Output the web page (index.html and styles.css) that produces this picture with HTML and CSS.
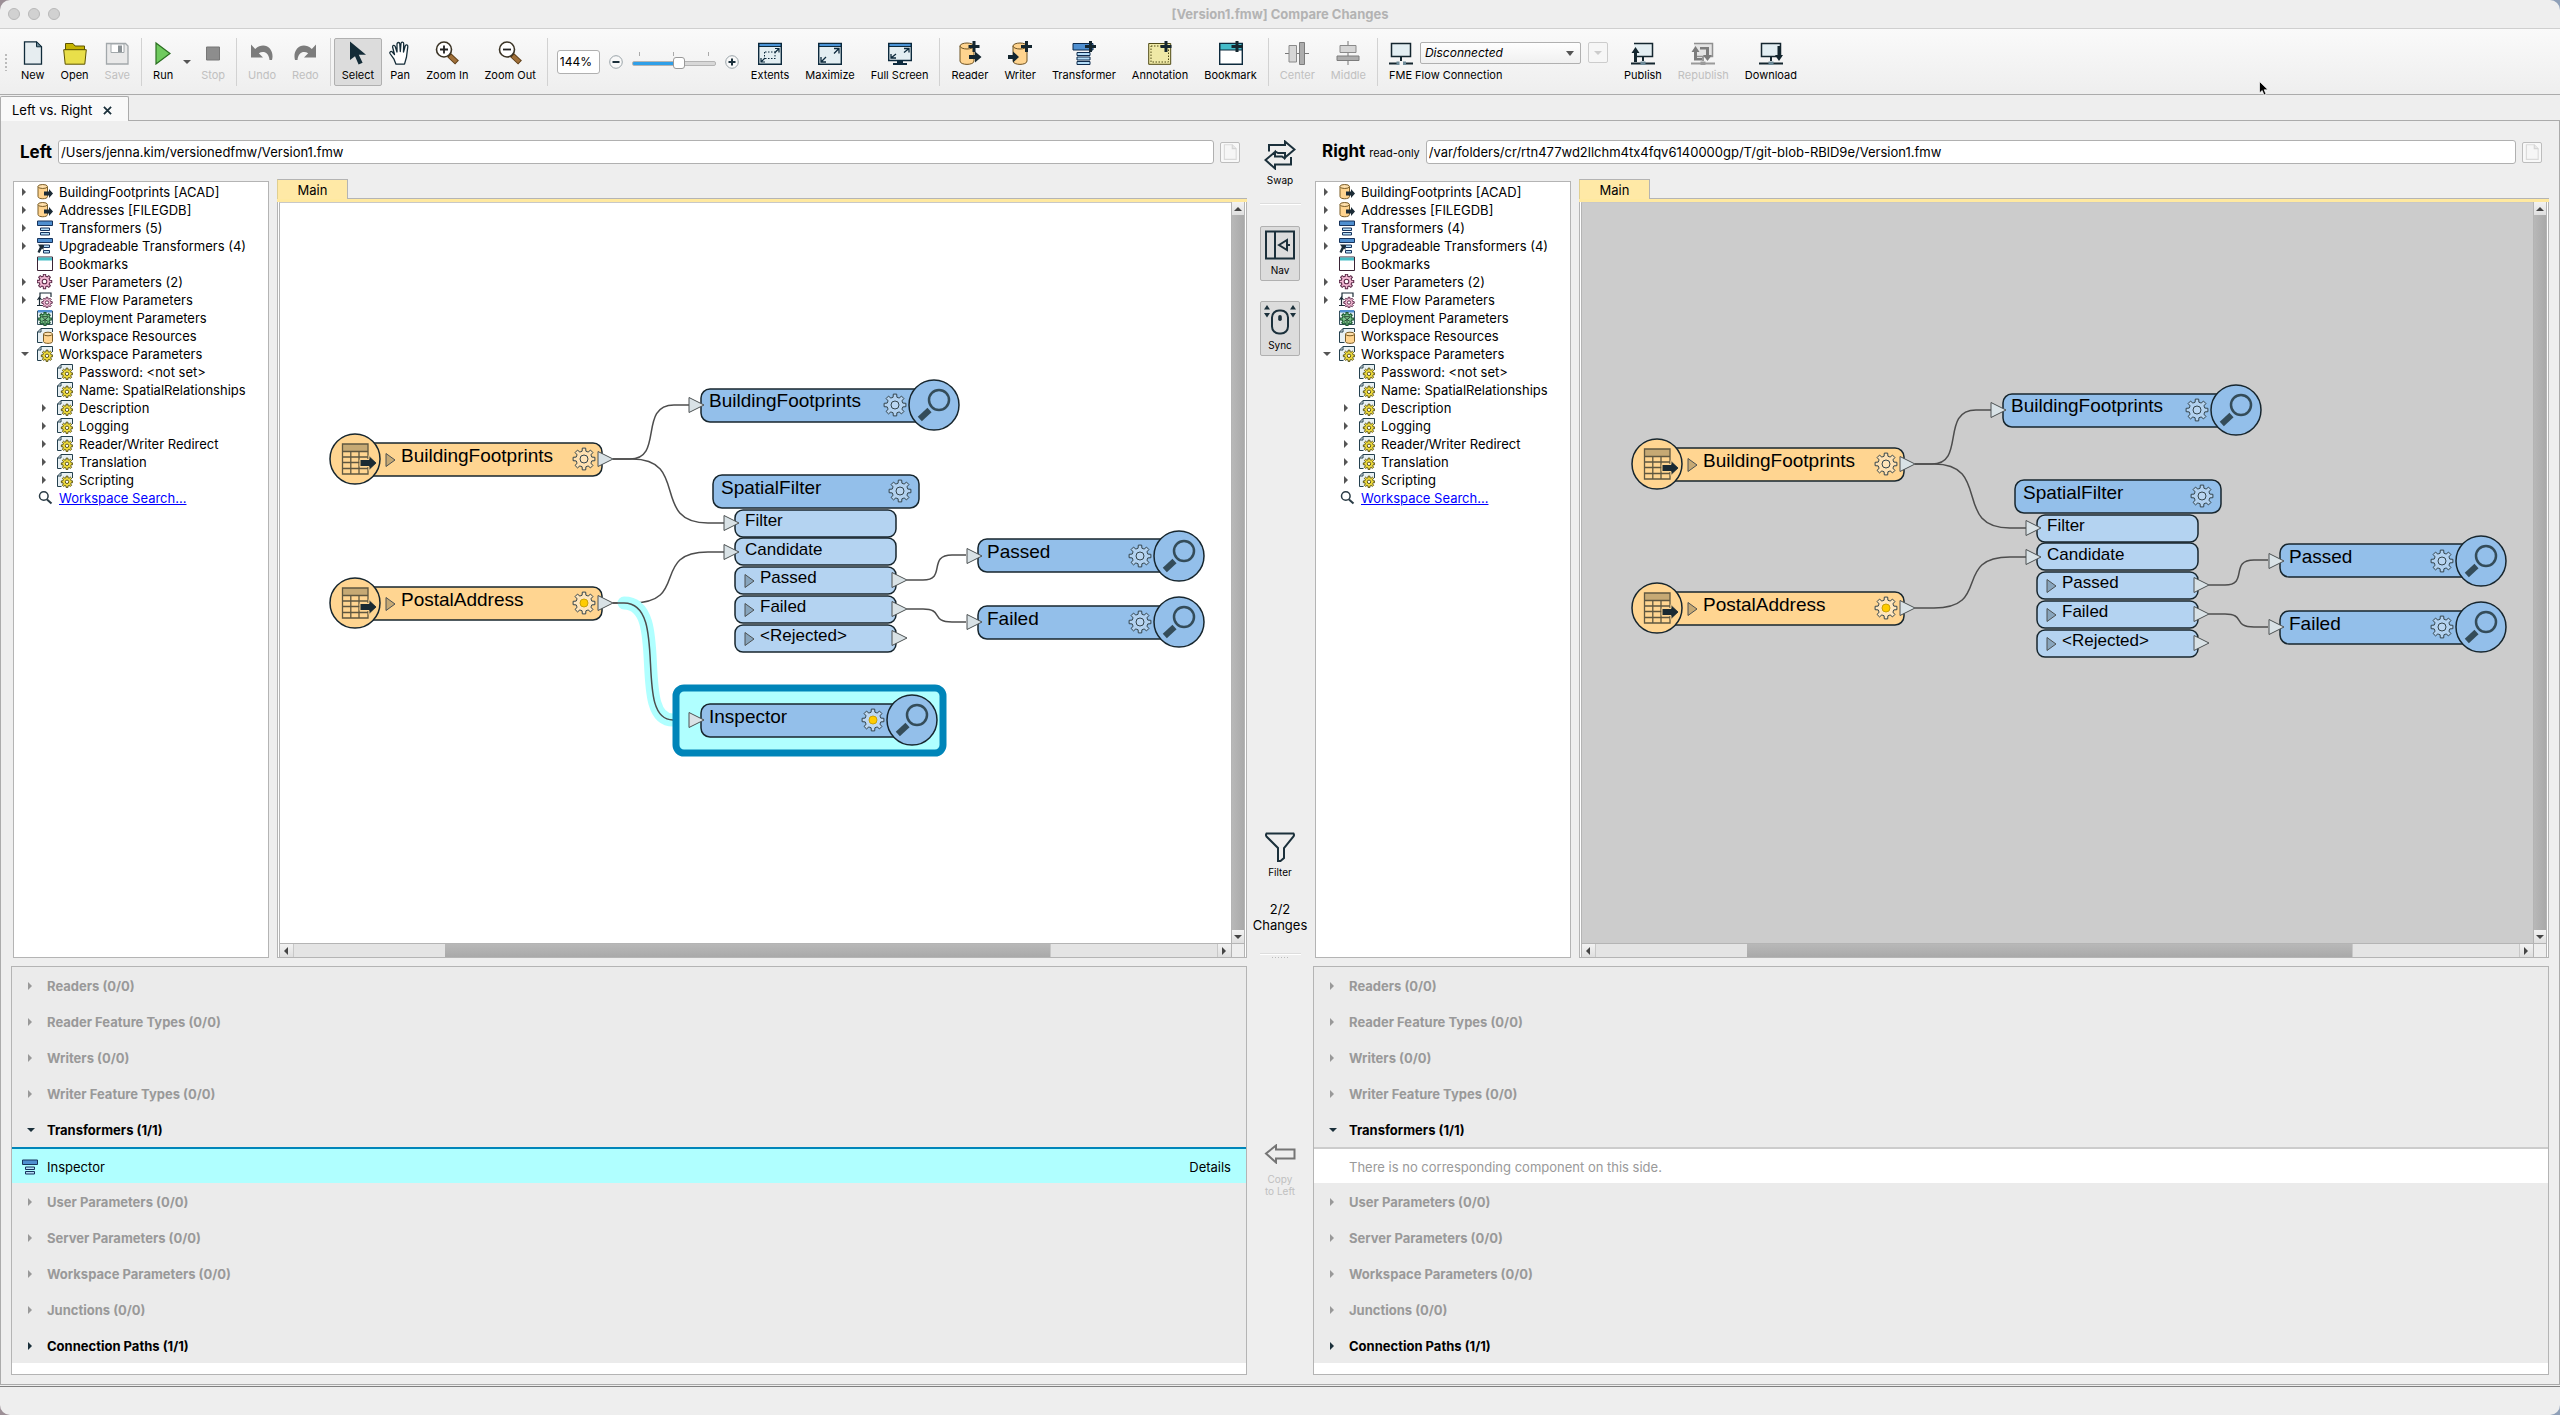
FILE: index.html
```html
<!DOCTYPE html>
<html lang="en">
<head>
<meta charset="utf-8">
<title>[Version1.fmw] Compare Changes</title>
<link rel="stylesheet" href="styles.css">
</head>
<body>
<svg class="sprite" aria-hidden="true">
  <defs>
    <path id="gear-shape" d="M7.8-1.9 10.9-1.7V1.7L7.8 1.9Q7.4 3.2 6.9 4.1L8.9 6.5 6.5 8.9 4.1 6.9Q3.2 7.4 1.9 7.8L1.7 10.9H-1.7L-1.9 7.8Q-3.2 7.4-4.1 6.9L-6.5 8.9-8.9 6.5-6.9 4.1Q-7.4 3.2-7.8 1.9L-10.9 1.7V-1.7L-7.8-1.9Q-7.4-3.2-6.9-4.1L-8.9-6.5-6.5-8.9-4.1-6.9Q-3.2-7.4-1.9-7.8L-1.7-10.9H1.7L1.9-7.8Q3.2-7.4 4.1-6.9L6.5-8.9 8.9-6.5 6.9-4.1Q7.4-3.2 7.8-1.9Z"/>
    <g id="node-gear"><use href="#gear-shape" fill="#fff" fill-opacity=".3" stroke="#33444c" stroke-width="1"/><circle r="4" fill="#fff" fill-opacity=".1" stroke="#33444c" stroke-width="1"/></g>
    <g id="node-gear-set"><use href="#gear-shape" fill="#fff" fill-opacity=".4" stroke="#33444c" stroke-width="1"/><circle r="4" fill="#fc0" stroke="#c9a208" stroke-width="1"/></g>
    <g id="node-lens"><circle r="25" fill="#93bfea" stroke="#17262e" stroke-width="1.5"/><path d="M-14.2 14-4.5 5" stroke="#344c59" stroke-width="6"/><circle cx="5" cy="-5" r="10" fill="none" stroke="#344c59" stroke-width="2.5"/></g>
    <g id="node-table"><circle r="25" fill="#ffd591" stroke="#17262e" stroke-width="1.5"/><path d="M-12.5-15h25.5v7.5h-25.5z" fill="#c6a974"/><path d="M-12.5-15h25.5V15h-25.5zM-12.5-7.5H13M-12.5-2H13M-12.5 3.5H13M-12.5 9.5H13M-4.2-7.5V15M4-7.5V15" fill="none" stroke="#5f5740" stroke-width="1.3"/><path d="M5 .5h9v-4L22 4l-8 7.500V7.500H5z" fill="#1a2a33" stroke="#ffd591" stroke-width="1"/></g>
    <path id="port" d="M0-7.500 15 0 0 7.500z" fill="#d9e2e6" stroke="#4c5152" stroke-width="1"/>
    <path id="chev" d="M0-6.500 9 0 0 6.500z"/>
  </defs>

  <symbol id="i-new" viewBox="0 0 24 24"><path d="M3.500.8h12l5 5v17.400h-17z" fill="#e6edf0" stroke="#102b3a" stroke-width="1.300"/><path d="M15.500.8v5h5z" fill="#6e8b99" stroke="#102b3a"/></symbol>
  <symbol id="i-open" viewBox="0 0 24 24"><path d="M2.500 9V2.500h7.500l2 2.500h9.500v4z" fill="#c6b400" stroke="#5c5300"/><path d="M.7 8.700h22.600l-1.500 14.500H2.200z" fill="#e9df4a" stroke="#5c5300"/></symbol>
  <symbol id="i-save" viewBox="0 0 24 24"><path d="M1.500 2.500h19l2.500 2.500v18h-21.500z" fill="#e9e9e9" stroke="#a2a8ab" stroke-width="1.300"/><path d="M6 3h13v8.500H6z" fill="#fff" stroke="#a2a8ab"/><path d="M13 4.500h4V11h-4z" fill="#8b9296"/></symbol>
  <symbol id="i-run" viewBox="0 0 24 24"><path d="M5 2l14 10.500L5 23z" fill="#6fca5e" stroke="#2a6e20" stroke-width="1.200"/></symbol>
  <symbol id="i-stop" viewBox="0 0 24 24"><path d="M5.500 6h13v13h-13z" fill="#8d8d8d" stroke="#777"/></symbol>
  <symbol id="i-undo" viewBox="0 0 24 24"><path d="M1 3.500v13h12l-4.200-4.200c4.500-2.800 10-1 10.700 6.700h2.500C25 8.500 15-.5 5.200 8z" fill="#7c7c7c"/></symbol>
  <symbol id="i-redo" viewBox="0 0 24 24"><path d="M23 3.500v13H11l4.200-4.200C10.700 9.500 5.200 11.300 4.500 19H2C-1 8.500 9-.5 18.800 8z" fill="#7c7c7c"/></symbol>
  <symbol id="i-select" viewBox="0 0 24 24"><path d="M4 .5v18.500l5-3.800 3.600 8.300 4-1.800-3.800-8h7.200z" fill="#142c38"/></symbol>
  <symbol id="i-pan" viewBox="0 0 24 24"><path d="M8 23.200l-2-5-4-5.700c-.8-1.500 1-2.800 2.300-1.500l2.200 2.500L4.600 6c-.2-1.800 2-2.200 2.600-.5L9 11V3c0-2 2.700-2 2.800 0l.5 7.500.7-8c.2-2 2.800-1.800 2.700.2L15.500 11l1.700-6c.5-1.700 2.800-1.200 2.600.6L18.500 16l-2 7.200z" fill="#fff" stroke="#142c38" stroke-width="1.300" stroke-linejoin="round"/></symbol>
  <symbol id="i-zin" viewBox="0 0 24 24"><path d="M14 14l8 7.500" stroke="#5a3a13" stroke-width="5.500"/><path d="M14.800 14.800l6.500 6" stroke="#a0703a" stroke-width="3.800"/><circle cx="9" cy="8.500" r="7.500" fill="#fff" stroke="#3b3426" stroke-width="1.600"/><path d="M5 8.500h8M9 4.500v8" stroke="#222" stroke-width="1.800"/></symbol>
  <symbol id="i-zout" viewBox="0 0 24 24"><path d="M14 14l8 7.500" stroke="#5a3a13" stroke-width="5.500"/><path d="M14.800 14.800l6.500 6" stroke="#a0703a" stroke-width="3.800"/><circle cx="9" cy="8.500" r="7.500" fill="#fff" stroke="#3b3426" stroke-width="1.600"/><path d="M5 8.500h8" stroke="#222" stroke-width="1.800"/></symbol>
  <symbol id="i-extents" viewBox="0 0 24 24"><path d="M.7 2.500h22.600v20.800H.7z" fill="#e3eef2" stroke="#0d2a3d" stroke-width="1.400"/><path d="M1 2.500h22v3H1z" fill="#4a93d6" stroke="#0d2a3d"/><path d="M7 11h10M7 17.500h10M6.500 11v7M17 11v7" stroke="#0d2a3d" stroke-dasharray="1.500 1.500"/><path d="M17 7.500h4v4M21 7.500l-4 4M3 17v4h4M3 21l4-4" fill="none" stroke="#0d2a3d" stroke-width="1.200"/></symbol>
  <symbol id="i-max" viewBox="0 0 24 24"><path d="M.7 2.500h22.600v20.800H.7z" fill="#e3eef2" stroke="#0d2a3d" stroke-width="1.400"/><path d="M1 2.500h22v3H1z" fill="#4a93d6" stroke="#0d2a3d"/><path d="M16 7.500h5v5M21 7.500l-5 5M3 16v5h5M3 21l5-5" fill="none" stroke="#0d2a3d" stroke-width="1.300"/></symbol>
  <symbol id="i-full" viewBox="0 0 24 24"><path d="M.7 2.500h22.600v17H.7z" fill="#e3eef2" stroke="#0d2a3d" stroke-width="1.400"/><path d="M1 2.500h22v3H1z" fill="#4a93d6" stroke="#0d2a3d"/><path d="M16 7.500h5v4M21 7.500l-5 4M3 13v4h5M3 17l5-4" fill="none" stroke="#0d2a3d" stroke-width="1.300"/><path d="M9 20h6v2h4v2H5v-2h4z" fill="#0d2a3d"/></symbol>
  <symbol id="i-reader" viewBox="0 0 24 24"><path d="M2 5v15c0 4.500 14 4.500 14 0V5" fill="#ffd48f" stroke="#6d5223"/><ellipse cx="9" cy="5" rx="7" ry="3" fill="#ffd48f" stroke="#6d5223"/><path d="M11 14h6v-3.500l6.500 5.500-6.500 5.500V18h-6z" fill="#14262f"/><path d="M16 0v11M10.500 5.500h11" stroke="#14262f" stroke-width="3"/></symbol>
  <symbol id="i-writer" viewBox="0 0 24 24"><path d="M5 5v15c0 4.500 14 4.500 14 0V5" fill="#ffd48f" stroke="#6d5223"/><ellipse cx="12" cy="5" rx="7" ry="3" fill="#ffd48f" stroke="#6d5223"/><path d="M0 14h5v-3.500l6 5.500-6 5.500V18H0z" fill="#14262f"/><path d="M18.500 0v11M13 5.500h11" stroke="#14262f" stroke-width="3"/></symbol>
  <symbol id="i-transformer" viewBox="0 0 24 24"><path d="M1 2.500h20v6.500H1z" fill="#4f8fd0" stroke="#0d2a4d"/><path d="M5 11.500h13v3H5zM5 16h13v3H5zM5 20.500h13v3H5z" fill="#b3dcf7" stroke="#0d2a4d"/><path d="M18.500 0v11M13 5.500h11" stroke="#14262f" stroke-width="3"/></symbol>
  <symbol id="i-annotation" viewBox="0 0 24 24"><path d="M.7 2.500h22v20.800h-22z" fill="#efe9a6" stroke="#4f4a16"/><path d="M3 5h17.500v16H3z" fill="none" stroke="#4f4a16" stroke-dasharray="1.500 1.500"/><path d="M18 0v11M12.500 5.500h11" stroke="#14262f" stroke-width="3"/></symbol>
  <symbol id="i-bookmark" viewBox="0 0 24 24"><path d="M.7 2.500h22.600v20.800H.7z" fill="#fff" stroke="#0d2a3d" stroke-width="1.400"/><path d="M1 2.500h22V9H1z" fill="#45bcc9" stroke="#0d2a3d"/><path d="M18 0v11M12.500 5.500H24" stroke="#14262f" stroke-width="3"/></symbol>
  <symbol id="i-center" viewBox="0 0 24 24"><path d="M0 12.500h24" stroke="#777"/><path d="M4 4.500h7.500v16.500H4z" fill="#d6d6d6" stroke="#8a8a8a"/><path d="M14.500 1.500h5v22h-5z" fill="#adadad" stroke="#7c7c7c"/></symbol>
  <symbol id="i-middle" viewBox="0 0 24 24"><path d="M12 0v24" stroke="#777"/><path d="M4 4.500h16v7H4z" fill="#d6d6d6" stroke="#8a8a8a"/><path d="M1 15h22v4.500H1z" fill="#adadad" stroke="#7c7c7c"/></symbol>
  <symbol id="i-flow" viewBox="0 0 24 24"><path d="M2.500 2.500h19v13h-19z" fill="#e3eef2" stroke="#14262f" stroke-width="1.500"/><path d="M12 16v4M0 22.500h8M16 22.500h8" stroke="#14262f" stroke-width="2"/><path d="M7.500 20.500h3v3.500h-3zM14 20.500h3v3.500h-3z" fill="#6e8b99"/></symbol>
  <symbol id="i-publish" viewBox="0 0 24 24"><path d="M3 2.500h18.500v13H5" fill="#e3eef2" stroke="#14262f" stroke-width="1.500"/><path d="M12 16v4M0 22.500h24" stroke="#14262f" stroke-width="2"/><path d="M9.500 20.500h5v3.500h-5z" fill="#6e8b99"/><path d="M4.500 6l4 6H6v9H3v-9H.5z" fill="#14262f"/></symbol>
  <symbol id="i-republish" viewBox="0 0 24 24"><path d="M3 2.500h18.500v13H5" fill="#e4e4e4" stroke="#909090" stroke-width="1.500"/><path d="M12 16v4M0 22.500h24" stroke="#9a9a9a" stroke-width="2"/><path d="M9.500 20.500h5v3.500h-5z" fill="#9a9a9a"/><path d="M4.500 5l4 6H6v6h5v2.500H3V11H.5zM9 6h9v8h3l-4.500 6L12 14h3V8.500H9z" fill="#7c7c7c"/></symbol>
  <symbol id="i-download" viewBox="0 0 24 24"><path d="M2.500 2.500h19v13h-19z" fill="#e3eef2" stroke="#14262f" stroke-width="1.500"/><path d="M12 16v4M0 22.500h24" stroke="#14262f" stroke-width="2"/><path d="M9.500 20.500h5v3.500h-5z" fill="#6e8b99"/><path d="M18.500 5h3v9h2.500l-4 6-4-6h2.500z" fill="#14262f"/></symbol>

  <symbol id="t-reader" viewBox="0 0 16 16"><path d="M1 2.500v10c0 3 9.500 3 9.500 0v-10" fill="#ffd48f" stroke="#7a5c27"/><ellipse cx="5.700" cy="2.500" rx="4.700" ry="2" fill="#ffe0ac" stroke="#7a5c27"/><path d="M7 7.500h5V5l4 4.500-4 4.500v-2.500H7z" fill="#1b2b36"/></symbol>
  <symbol id="t-transformer" viewBox="0 0 16 16"><path d="M.5 1h15v4.500H.5z" fill="#4f8fd0" stroke="#17335c"/><path d="M3.500 8h9v2.500h-9zM3.500 12.500h9V15h-9z" fill="#b3dcf7" stroke="#17335c"/></symbol>
  <symbol id="t-upgrade" viewBox="0 0 16 16"><path d="M.5.5h15v4H.5z" fill="#4f8fd0" stroke="#17335c"/><path d="M6.500 7h6v2.500h-6zM6.500 12.500h6V15h-6z" fill="#b3dcf7" stroke="#17335c"/><path d="M1 6.500h5.500V12L5 10.500 2.500 15 .5 14l2.300-5z" fill="#1b2b36"/></symbol>
  <symbol id="t-bookmarks" viewBox="0 0 16 16"><path d="M.5 1h15v13.500H.5z" fill="#fff" stroke="#3a2436"/><path d="M1 1.500h14v3H1z" fill="#45bcc4"/></symbol>
  <symbol id="t-user" viewBox="0 0 16 16"><g transform="translate(7.500 7.500) scale(.66)"><use href="#gear-shape" fill="#f3b9d4" stroke="#5c2a49" stroke-width="1.600"/><circle r="3.500" fill="#fff" stroke="#5c2a49" stroke-width="1.600"/></g></symbol>
  <symbol id="t-flow" viewBox="0 0 16 16"><path d="M3 5V1h11v4M2.500 13V6M.5 8l2-3 2 3M0 13.500h6" fill="none" stroke="#1b2b36" stroke-width="1.200"/><g transform="translate(10 10.500) scale(.48)"><use href="#gear-shape" fill="#f3b9d4" stroke="#5c2a49" stroke-width="2"/><circle r="3.500" fill="#fff" stroke="#5c2a49" stroke-width="2"/></g></symbol>
  <symbol id="t-deploy" viewBox="0 0 16 16"><path d="M.5 1h15v13.500H.5z" fill="#e6f0f4" stroke="#35505e"/><path d="M1 0h14v2.500H1z" fill="#4f8fd0"/><g transform="translate(8 9) scale(.58)"><use href="#gear-shape" fill="#7cc48c" stroke="#1d5a32" stroke-width="2"/><path d="M-5-4 0 1l5-4M0 1v6M-5-4H5M-5 4 0 1l5 3" fill="none" stroke="#1d3a2a" stroke-width="1.500"/></g></symbol>
  <symbol id="t-res" viewBox="0 0 16 16"><path d="M5.500 14.500H.5V4L4 .5h11.500V4M4 .5V4H.5" fill="#e8f0f3" stroke="#24404f"/><path d="M6.500 6v7.500c0 2.500 9 2.500 9 0V6" fill="#ffd48f" stroke="#7a5c27"/><ellipse cx="11" cy="6" rx="4.500" ry="1.800" fill="#ffe0ac" stroke="#7a5c27"/></symbol>
  <symbol id="t-param" viewBox="0 0 16 16"><path d="M4.500 14.500H.5V4L4 .5h11.500V6M4 .5V4H.5" fill="#e8f0f3" stroke="#24404f"/><g transform="translate(10 9.800) scale(.52)"><use href="#gear-shape" fill="#f0dc3c" stroke="#544c10" stroke-width="1.800"/><circle r="3.300" fill="#fff" stroke="#544c10" stroke-width="1.800"/></g></symbol>
  <symbol id="t-search" viewBox="0 0 16 16"><circle cx="6.800" cy="6" r="4.300" fill="none" stroke="#2a3b45" stroke-width="1.500"/><path d="M10 9.500l4.500 4" stroke="#2a3b45" stroke-width="2"/></symbol>
  <symbol id="a-right" viewBox="0 0 8 8"><path d="M1 0l4 4-4 4z" fill="currentColor"/></symbol>
  <symbol id="a-down" viewBox="0 0 8 8"><path d="M0 2h8L4 6z" fill="currentColor"/></symbol>
  <symbol id="a-left" viewBox="0 0 8 8"><path d="M5 0v8L1 4z" fill="currentColor"/></symbol>
  <symbol id="a-up" viewBox="0 0 8 8"><path d="M0 6h8L4 2z" fill="currentColor"/></symbol>
  <symbol id="i-page" viewBox="0 0 16 16"><path d="M3 1.500h7l3.500 3.500v9.500H3z" fill="#f6f6f6" stroke="#dadada"/><path d="M10 1.500V5h3.500" fill="#e6e6e6" stroke="#d4d4d4"/></symbol>
  <symbol id="m-swap" viewBox="0 0 32 30"><path d="M5 11.500V5h16V1.500l9.500 8-9.500 8v-4.500H14l-3.500-2M27 17v7.500H11V28.500L1.500 20l9.500-8v4.500h7l3.500 2.500" fill="none" stroke="#1b303b" stroke-width="2"/></symbol>
  <symbol id="m-nav" viewBox="0 0 32 30"><path d="M2 1.500h28v27H2zM11 1.500v27" fill="none" stroke="#1b303b" stroke-width="2"/><path d="M15 15l8-5v10zM22 15h4" fill="none" stroke="#1b303b" stroke-width="2"/></symbol>
  <symbol id="m-sync" viewBox="0 0 32 30"><rect x="8" y="5.500" width="16" height="23" rx="7" fill="none" stroke="#1b303b" stroke-width="2"/><rect x="14.200" y="10" width="3.600" height="6" rx="1.800" fill="#1b303b"/><path d="M0 4.500l3-4.500 3 4.500zM0 8h6l-3 4.500zM26 4.500L29 0l3 4.500zM26 8h6l-3 4.500z" fill="#1b303b"/></symbol>
  <symbol id="m-filter" viewBox="0 0 32 30"><path d="M2.500 1.500h27q1 1.500 0 3L20 16v10l-3.500 3h-2.500V16L2.500 4.500q-1-1.500 0-3z" fill="none" stroke="#1b303b" stroke-width="2"/></symbol>
  <symbol id="m-copy" viewBox="0 0 32 20"><path d="M2 9.500L12 1.500v4h18.500v9H12v4z" fill="none" stroke="#757575" stroke-width="2"/></symbol>
</svg>

<div class="window">
  <header class="titlebar">
    <div class="lights"><i></i><i></i><i></i></div>
    <h1>[Version1.fmw] Compare Changes</h1>
  </header>

  <nav class="toolbar" aria-label="Main toolbar">
    <span class="grip"></span>
    <button class="tool"><svg><use href="#i-new"/></svg>New</button>
    <button class="tool"><svg><use href="#i-open"/></svg>Open</button>
    <button class="tool" disabled><svg><use href="#i-save"/></svg>Save</button>
    <span class="sep"></span>
    <button class="tool"><svg><use href="#i-run"/></svg>Run</button>
    <button class="drop" aria-label="Run options"><svg><use href="#a-down"/></svg></button>
    <button class="tool" disabled><svg><use href="#i-stop"/></svg>Stop</button>
    <span class="sep"></span>
    <button class="tool" disabled><svg><use href="#i-undo"/></svg>Undo</button>
    <button class="tool" disabled><svg><use href="#i-redo"/></svg>Redo</button>
    <span class="sep"></span>
    <button class="tool pressed" aria-pressed="true"><svg><use href="#i-select"/></svg>Select</button>
    <button class="tool"><svg><use href="#i-pan"/></svg>Pan</button>
    <button class="tool"><svg><use href="#i-zin"/></svg>Zoom In</button>
    <button class="tool"><svg><use href="#i-zout"/></svg>Zoom Out</button>
    <span class="sep"></span>
    <div class="zoom">
      <input class="zoom-value" type="text" value="144%" aria-label="Zoom level">
      <button class="round" aria-label="Decrease zoom"><svg viewBox="0 0 14 14"><circle cx="7" cy="7" r="6.300" fill="#f8f8f8" stroke="#9aa4a9"/><path d="M3.500 7h7" stroke="#1b303b" stroke-width="2"/></svg></button>
      <div class="slider"><span class="ticks"><i></i><i></i><i></i></span><input type="range" min="0" max="100" value="57" aria-label="Zoom"></div>
      <button class="round" aria-label="Increase zoom"><svg viewBox="0 0 14 14"><circle cx="7" cy="7" r="6.300" fill="#f8f8f8" stroke="#9aa4a9"/><path d="M3.500 7h7M7 3.500v7" stroke="#1b303b" stroke-width="2"/></svg></button>
    </div>
    <button class="tool"><svg><use href="#i-extents"/></svg>Extents</button>
    <button class="tool"><svg><use href="#i-max"/></svg>Maximize</button>
    <button class="tool"><svg><use href="#i-full"/></svg>Full Screen</button>
    <span class="sep"></span>
    <button class="tool"><svg><use href="#i-reader"/></svg>Reader</button>
    <button class="tool"><svg><use href="#i-writer"/></svg>Writer</button>
    <button class="tool"><svg><use href="#i-transformer"/></svg>Transformer</button>
    <button class="tool"><svg><use href="#i-annotation"/></svg>Annotation</button>
    <button class="tool"><svg><use href="#i-bookmark"/></svg>Bookmark</button>
    <span class="sep"></span>
    <button class="tool" disabled><svg><use href="#i-center"/></svg>Center</button>
    <button class="tool" disabled><svg><use href="#i-middle"/></svg>Middle</button>
    <span class="sep"></span>
    <div class="flow">
      <div class="flow-row">
        <svg><use href="#i-flow"/></svg>
        <span class="combo"><select id="flow-conn"><option>Disconnected</option></select></span>
        <button class="mini" disabled aria-label="Connection options"><svg><use href="#a-down"/></svg></button>
      </div>
      <label for="flow-conn">FME Flow Connection</label>
    </div>
    <button class="tool"><svg><use href="#i-publish"/></svg>Publish</button>
    <button class="tool" disabled><svg><use href="#i-republish"/></svg>Republish</button>
    <button class="tool"><svg><use href="#i-download"/></svg>Download</button>
  </nav>

  <div class="tabs"><div class="tab">Left vs. Right <button aria-label="Close tab"><svg viewBox="0 0 8 8"><path d="M.8.8l6.400 6.400M7.200.8L.8 7.200" stroke="#1b303b" stroke-width="1.600"/></svg></button></div></div>

  <main class="compare">
    <section class="side">
      <div class="path"><label for="left-path">Left</label><input id="left-path" type="text" value="/Users/jenna.kim/versionedfmw/Version1.fmw"><button disabled aria-label="Browse"><svg><use href="#i-page"/></svg></button></div>
      <div class="panes">
        <ul class="tree">
          <li><svg class="arw"><use href="#a-right"/></svg><svg><use href="#t-reader"/></svg>BuildingFootprints [ACAD]</li>
          <li><svg class="arw"><use href="#a-right"/></svg><svg><use href="#t-reader"/></svg>Addresses [FILEGDB]</li>
          <li><svg class="arw"><use href="#a-right"/></svg><svg><use href="#t-transformer"/></svg>Transformers (5)</li>
          <li><svg class="arw"><use href="#a-right"/></svg><svg><use href="#t-upgrade"/></svg>Upgradeable Transformers (4)</li>
          <li><svg class="arw"></svg><svg><use href="#t-bookmarks"/></svg>Bookmarks</li>
          <li><svg class="arw"><use href="#a-right"/></svg><svg><use href="#t-user"/></svg>User Parameters (2)</li>
          <li><svg class="arw"><use href="#a-right"/></svg><svg><use href="#t-flow"/></svg>FME Flow Parameters</li>
          <li><svg class="arw"></svg><svg><use href="#t-deploy"/></svg>Deployment Parameters</li>
          <li><svg class="arw"></svg><svg><use href="#t-res"/></svg>Workspace Resources</li>
          <li><svg class="arw"><use href="#a-down"/></svg><svg><use href="#t-param"/></svg>Workspace Parameters</li>
          <li class="child"><svg class="arw"></svg><svg><use href="#t-param"/></svg>Password: &lt;not set&gt;</li>
          <li class="child"><svg class="arw"></svg><svg><use href="#t-param"/></svg>Name: SpatialRelationships</li>
          <li class="child"><svg class="arw"><use href="#a-right"/></svg><svg><use href="#t-param"/></svg>Description</li>
          <li class="child"><svg class="arw"><use href="#a-right"/></svg><svg><use href="#t-param"/></svg>Logging</li>
          <li class="child"><svg class="arw"><use href="#a-right"/></svg><svg><use href="#t-param"/></svg>Reader/Writer Redirect</li>
          <li class="child"><svg class="arw"><use href="#a-right"/></svg><svg><use href="#t-param"/></svg>Translation</li>
          <li class="child"><svg class="arw"><use href="#a-right"/></svg><svg><use href="#t-param"/></svg>Scripting</li>
          <li><svg class="arw"></svg><svg><use href="#t-search"/></svg><a href="#search">Workspace Search...</a></li>
        </ul>
        <div class="workspace">
          <div class="ws-tabs"><span class="ws-tab">Main</span></div>
          <div class="ws-frame">
            <svg class="canvas" role="img" aria-label="Left workspace">
              <g transform="translate(-280 -202)">
                <g class="wire">
                  <path d="M613 458H630C664 458 638 404 674 404H689"/>
                  <path d="M613 458H632C690 458 650 522 708 522H724"/>
                  <path d="M613 602H632C690 602 650 551 708 551H724"/>
                  <path class="glow" d="M624 602C670 602 632 719 673 719"/>
                  <path d="M613 602H624C670 602 632 719 673 719"/>
                  <path d="M907 579H923C947 579 927 554 952 554H966"/>
                  <path d="M907 608H923C944 608 930 621 952 621H966"/>
                </g>
                <g class="reader"><rect x="356" y="442" width="246" height="33" rx="9"/><use href="#node-table" x="355" y="458"/><use class="chev" href="#chev" x="386" y="459"/><use href="#node-gear" x="584" y="458"/><use href="#port" x="598" y="458"/><text x="401" y="461">BuildingFootprints</text></g>
                <g class="reader"><rect x="356" y="586" width="246" height="33" rx="9"/><use href="#node-table" x="355" y="602"/><use class="chev" href="#chev" x="386" y="603"/><use href="#node-gear-set" x="584" y="602"/><use href="#port" x="598" y="602"/><text x="401" y="605">PostalAddress</text></g>
                <g class="insp"><rect x="701" y="388" width="230" height="33" rx="9"/><use href="#node-gear" x="895" y="404"/><use href="#node-lens" x="934" y="404"/><use href="#port" x="689" y="404"/><text x="709" y="406">BuildingFootprints</text></g>
                <g class="ports">
                  <rect x="735" y="509" width="161" height="27" rx="8"/><rect x="735" y="537" width="161" height="27" rx="8"/><rect x="735" y="566" width="161" height="27" rx="8"/><rect x="735" y="595" width="161" height="27" rx="8"/><rect x="735" y="624" width="161" height="27" rx="8"/>
                  <use href="#port" x="724" y="522"/><use href="#port" x="724" y="551"/><use href="#port" x="892" y="579"/><use href="#port" x="892" y="608"/><use href="#port" x="892" y="637"/>
                  <use class="chev" href="#chev" x="745" y="580"/><use class="chev" href="#chev" x="745" y="609"/><use class="chev" href="#chev" x="745" y="638"/>
                  <text x="745" y="525">Filter</text><text x="745" y="554">Candidate</text><text x="760" y="582">Passed</text><text x="760" y="611">Failed</text><text x="760" y="640">&lt;Rejected&gt;</text>
                </g>
                <g class="insp"><rect x="713" y="474" width="206" height="33" rx="9"/><use href="#node-gear" x="900" y="490"/><text x="721" y="493">SpatialFilter</text></g>
                <g class="insp"><rect x="978" y="538" width="200" height="33" rx="9"/><use href="#node-gear" x="1140" y="555"/><use href="#node-lens" x="1179" y="555"/><use href="#port" x="967" y="555"/><text x="987" y="557">Passed</text></g>
                <g class="insp"><rect x="978" y="605" width="200" height="33" rx="9"/><use href="#node-gear" x="1140" y="621"/><use href="#node-lens" x="1179" y="621"/><use href="#port" x="967" y="621"/><text x="987" y="624">Failed</text></g>
                <rect class="picked" x="676" y="687" width="267" height="65" rx="8"/>
                <g class="insp"><rect x="701" y="703" width="210" height="33" rx="9"/><use href="#node-gear-set" x="873" y="719"/><use href="#node-lens" x="912" y="719"/><use href="#port" x="689" y="719"/><text x="709" y="722">Inspector</text></g>
              </g>
            </svg>
            <div class="vbar"><span class="sb"><svg><use href="#a-up"/></svg></span><span class="thumb"></span><span class="sb"><svg><use href="#a-down"/></svg></span></div>
            <div class="hbar"><span class="sb"><svg><use href="#a-left"/></svg></span><span class="track"></span><span class="thumb"></span><span class="track"></span><span class="sb"><svg><use href="#a-right"/></svg></span></div>
            <div class="corner"></div>
          </div>
        </div>
      </div>
    </section>

    <section class="middle">
      <button class="mid"><svg><use href="#m-swap"/></svg>Swap</button>
      <hr>
      <button class="mid on" aria-pressed="true"><svg><use href="#m-nav"/></svg>Nav</button>
      <button class="mid on" aria-pressed="true"><svg><use href="#m-sync"/></svg>Sync</button>
      <button class="mid filter"><svg><use href="#m-filter"/></svg>Filter</button>
      <p>2/2<br>Changes</p>
      <hr class="low">
      <span class="dots"></span>
    </section>

    <section class="side">
      <div class="path"><label for="right-path">Right <small>read-only</small></label><input id="right-path" type="text" readonly value="/var/folders/cr/rtn477wd2llchm4tx4fqv6140000gp/T/git-blob-RBlD9e/Version1.fmw"><button disabled aria-label="Browse"><svg><use href="#i-page"/></svg></button></div>
      <div class="panes">
        <ul class="tree">
          <li><svg class="arw"><use href="#a-right"/></svg><svg><use href="#t-reader"/></svg>BuildingFootprints [ACAD]</li>
          <li><svg class="arw"><use href="#a-right"/></svg><svg><use href="#t-reader"/></svg>Addresses [FILEGDB]</li>
          <li><svg class="arw"><use href="#a-right"/></svg><svg><use href="#t-transformer"/></svg>Transformers (4)</li>
          <li><svg class="arw"><use href="#a-right"/></svg><svg><use href="#t-upgrade"/></svg>Upgradeable Transformers (4)</li>
          <li><svg class="arw"></svg><svg><use href="#t-bookmarks"/></svg>Bookmarks</li>
          <li><svg class="arw"><use href="#a-right"/></svg><svg><use href="#t-user"/></svg>User Parameters (2)</li>
          <li><svg class="arw"><use href="#a-right"/></svg><svg><use href="#t-flow"/></svg>FME Flow Parameters</li>
          <li><svg class="arw"></svg><svg><use href="#t-deploy"/></svg>Deployment Parameters</li>
          <li><svg class="arw"></svg><svg><use href="#t-res"/></svg>Workspace Resources</li>
          <li><svg class="arw"><use href="#a-down"/></svg><svg><use href="#t-param"/></svg>Workspace Parameters</li>
          <li class="child"><svg class="arw"></svg><svg><use href="#t-param"/></svg>Password: &lt;not set&gt;</li>
          <li class="child"><svg class="arw"></svg><svg><use href="#t-param"/></svg>Name: SpatialRelationships</li>
          <li class="child"><svg class="arw"><use href="#a-right"/></svg><svg><use href="#t-param"/></svg>Description</li>
          <li class="child"><svg class="arw"><use href="#a-right"/></svg><svg><use href="#t-param"/></svg>Logging</li>
          <li class="child"><svg class="arw"><use href="#a-right"/></svg><svg><use href="#t-param"/></svg>Reader/Writer Redirect</li>
          <li class="child"><svg class="arw"><use href="#a-right"/></svg><svg><use href="#t-param"/></svg>Translation</li>
          <li class="child"><svg class="arw"><use href="#a-right"/></svg><svg><use href="#t-param"/></svg>Scripting</li>
          <li><svg class="arw"></svg><svg><use href="#t-search"/></svg><a href="#search">Workspace Search...</a></li>
        </ul>
        <div class="workspace">
          <div class="ws-tabs"><span class="ws-tab">Main</span></div>
          <div class="ws-frame">
            <svg class="canvas locked" role="img" aria-label="Right workspace">
              <g transform="translate(-280 -197)">
                <g class="wire">
                  <path d="M613 458H630C664 458 638 404 674 404H689"/>
                  <path d="M613 458H632C690 458 650 522 708 522H724"/>
                  <path d="M613 602H632C690 602 650 551 708 551H724"/>
                  <path d="M907 579H923C947 579 927 554 952 554H966"/>
                  <path d="M907 608H923C944 608 930 621 952 621H966"/>
                </g>
                <g class="reader"><rect x="356" y="442" width="246" height="33" rx="9"/><use href="#node-table" x="355" y="458"/><use class="chev" href="#chev" x="386" y="459"/><use href="#node-gear" x="584" y="458"/><use href="#port" x="598" y="458"/><text x="401" y="461">BuildingFootprints</text></g>
                <g class="reader"><rect x="356" y="586" width="246" height="33" rx="9"/><use href="#node-table" x="355" y="602"/><use class="chev" href="#chev" x="386" y="603"/><use href="#node-gear-set" x="584" y="602"/><use href="#port" x="598" y="602"/><text x="401" y="605">PostalAddress</text></g>
                <g class="insp"><rect x="701" y="388" width="230" height="33" rx="9"/><use href="#node-gear" x="895" y="404"/><use href="#node-lens" x="934" y="404"/><use href="#port" x="689" y="404"/><text x="709" y="406">BuildingFootprints</text></g>
                <g class="ports">
                  <rect x="735" y="509" width="161" height="27" rx="8"/><rect x="735" y="537" width="161" height="27" rx="8"/><rect x="735" y="566" width="161" height="27" rx="8"/><rect x="735" y="595" width="161" height="27" rx="8"/><rect x="735" y="624" width="161" height="27" rx="8"/>
                  <use href="#port" x="724" y="522"/><use href="#port" x="724" y="551"/><use href="#port" x="892" y="579"/><use href="#port" x="892" y="608"/><use href="#port" x="892" y="637"/>
                  <use class="chev" href="#chev" x="745" y="580"/><use class="chev" href="#chev" x="745" y="609"/><use class="chev" href="#chev" x="745" y="638"/>
                  <text x="745" y="525">Filter</text><text x="745" y="554">Candidate</text><text x="760" y="582">Passed</text><text x="760" y="611">Failed</text><text x="760" y="640">&lt;Rejected&gt;</text>
                </g>
                <g class="insp"><rect x="713" y="474" width="206" height="33" rx="9"/><use href="#node-gear" x="900" y="490"/><text x="721" y="493">SpatialFilter</text></g>
                <g class="insp"><rect x="978" y="538" width="200" height="33" rx="9"/><use href="#node-gear" x="1140" y="555"/><use href="#node-lens" x="1179" y="555"/><use href="#port" x="967" y="555"/><text x="987" y="557">Passed</text></g>
                <g class="insp"><rect x="978" y="605" width="200" height="33" rx="9"/><use href="#node-gear" x="1140" y="621"/><use href="#node-lens" x="1179" y="621"/><use href="#port" x="967" y="621"/><text x="987" y="624">Failed</text></g>
              </g>
            </svg>
            <div class="vbar"><span class="sb"><svg><use href="#a-up"/></svg></span><span class="thumb"></span><span class="sb"><svg><use href="#a-down"/></svg></span></div>
            <div class="hbar"><span class="sb"><svg><use href="#a-left"/></svg></span><span class="track"></span><span class="thumb"></span><span class="track"></span><span class="sb"><svg><use href="#a-right"/></svg></span></div>
            <div class="corner"></div>
          </div>
        </div>
      </div>
    </section>

    <ul class="diff">
      <li><svg><use href="#a-right"/></svg>Readers (0/0)</li>
      <li><svg><use href="#a-right"/></svg>Reader Feature Types (0/0)</li>
      <li><svg><use href="#a-right"/></svg>Writers (0/0)</li>
      <li><svg><use href="#a-right"/></svg>Writer Feature Types (0/0)</li>
      <li class="has"><svg><use href="#a-down"/></svg>Transformers (1/1)</li>
      <li class="item"><svg><use href="#t-transformer"/></svg>Inspector <a href="#details">Details</a></li>
      <li><svg><use href="#a-right"/></svg>User Parameters (0/0)</li>
      <li><svg><use href="#a-right"/></svg>Server Parameters (0/0)</li>
      <li><svg><use href="#a-right"/></svg>Workspace Parameters (0/0)</li>
      <li><svg><use href="#a-right"/></svg>Junctions (0/0)</li>
      <li class="has"><svg><use href="#a-right"/></svg>Connection Paths (1/1)</li>
    </ul>

    <div class="copy"><button class="mid" disabled><svg><use href="#m-copy"/></svg>Copy<br>to Left</button></div>

    <ul class="diff">
      <li><svg><use href="#a-right"/></svg>Readers (0/0)</li>
      <li><svg><use href="#a-right"/></svg>Reader Feature Types (0/0)</li>
      <li><svg><use href="#a-right"/></svg>Writers (0/0)</li>
      <li><svg><use href="#a-right"/></svg>Writer Feature Types (0/0)</li>
      <li class="has"><svg><use href="#a-down"/></svg>Transformers (1/1)</li>
      <li class="none">There is no corresponding component on this side.</li>
      <li><svg><use href="#a-right"/></svg>User Parameters (0/0)</li>
      <li><svg><use href="#a-right"/></svg>Server Parameters (0/0)</li>
      <li><svg><use href="#a-right"/></svg>Workspace Parameters (0/0)</li>
      <li><svg><use href="#a-right"/></svg>Junctions (0/0)</li>
      <li class="has"><svg><use href="#a-right"/></svg>Connection Paths (1/1)</li>
    </ul>
  </main>
  <footer class="status"></footer>
</div>
<svg class="pointer" viewBox="0 0 10 15" aria-hidden="true"><path d="M.5.5v11.500l2.700-2.500 1.800 4.500 2-.8-1.800-4.400H9z" fill="#000" stroke="#fff" stroke-width=".7"/></svg>
</body>
</html>
```
FILE: styles.css
```css
* { box-sizing: border-box; }

html { background: linear-gradient(90deg, #9c8f96, #8fa0b8); }

body {
  margin: 0;
  font: 13px/16px Inter, "Liberation Sans", sans-serif;
  color: #000;
}

button, input, select { font: inherit; color: inherit; margin: 0; }
button { padding: 0; border: 0; background: none; }
ul { list-style: none; margin: 0; padding: 0; }
svg { flex: none; }

.sprite { position: absolute; width: 0; height: 0; }

.window {
  min-height: 100vh;
  display: flex;
  flex-direction: column;
  background: #eee;
  border-radius: 10px;
  overflow: hidden;
}

/* title bar */
.titlebar {
  display: grid;
  grid-template-columns: 1fr auto 1fr;
  align-items: center;
  height: 29px;
  border-bottom: 1px solid #cfcfcf;
}
.titlebar h1 { margin: 0; font-size: 13px; line-height: 16px; font-weight: 700; color: #b3b3b3; }
.lights { display: flex; gap: 8px; padding-left: 8px; }
.lights i { width: 12px; height: 12px; border-radius: 50%; background: #d1d1d1; border: 1px solid #b8b8b8; }

/* toolbar */
.toolbar {
  display: flex;
  align-items: center;
  height: 66px;
  padding: 0 4px;
  background: linear-gradient(#fafafa, #eee);
  border-bottom: 1px solid #ababab;
  font-size: 11px;
}
.grip { width: 5px; height: 18px; margin-right: 4px; background: radial-gradient(#bbb 1px, transparent 1px) 0 0 / 4px 4px; }
.tool {
  display: flex;
  flex-direction: column;
  align-items: center;
  height: 48px;
  padding: 2px 7px 0;
  border: 1px solid transparent;
  border-radius: 2px;
  white-space: nowrap;
}
.tool svg { margin: 0 -2px 2px; }
.tool svg, .flow-row > svg { width: 24px; height: 24px; }
.tool:disabled { color: #c0c0c0; }
.tool.pressed { background: #dcdcdc; border-color: #b0b0b0; }
.sep { width: 1px; height: 48px; margin: 0 3px; background: #d2d2d2; }
.drop { width: 12px; height: 20px; color: #555; }
.drop svg { width: 8px; height: 8px; }
.zoom { display: flex; align-items: center; gap: 9px; margin: 0 4px 0 6px; }
.zoom-value { width: 43px; height: 24px; padding: 0 2px; border: 1px solid #b0b0b0; border-radius: 3px; background: #fff; font-size: 12px; }
.round { width: 14px; height: 14px; }
.round svg { display: block; width: 14px; height: 14px; }
.slider { width: 84px; display: flex; flex-direction: column; }
.ticks { display: flex; justify-content: space-between; padding: 0 7px; }
.ticks i { width: 1px; height: 4px; background: #aaa; }
.slider input { appearance: none; width: 100%; height: 16px; background: none; }
.slider input::-webkit-slider-runnable-track { height: 5px; border: 1px solid #b4b4b4; border-radius: 2px; background: linear-gradient(90deg, #2f9fe8 57%, #d8d8d8 57%); }
.slider input::-webkit-slider-thumb { appearance: none; width: 12px; height: 12px; margin-top: -5px; border: 1px solid #999; border-radius: 3px; background: #fff; }
.flow { display: flex; flex-direction: column; gap: 2px; align-self: flex-start; padding: 12px 8px 0 8px; }
.flow-row { display: flex; gap: 7px; }
.combo { position: relative; height: 22px; margin-top: 1px; }
.combo::after { content: ""; position: absolute; right: 7px; top: 9px; border: 4px solid transparent; border-top: 5px solid #555; }
.combo select { appearance: none; width: 161px; height: 22px; padding: 0 4px; border: 1px solid #b0b0b0; border-radius: 2px; background: linear-gradient(#fefefe, #f0f0f0); font-size: 12px; font-style: italic; }
.mini { width: 20px; height: 21px; margin-top: 1px; border: 1px solid #ccc; border-radius: 2px; background: #f6f6f6; color: #ccc; }
.mini svg { width: 8px; height: 8px; }

/* document tabs */
.tabs { display: flex; height: 26px; padding-top: 1px; border-bottom: 1px solid #ababab; }
.tab {
  display: flex;
  align-items: center;
  gap: 11px;
  padding: 2px 16px 0 11px;
  height: 25px;
  border: 1px solid #ababab;
  border-bottom: 0;
  border-radius: 2px 2px 0 0;
  background: #f9f9f9;
}
.tab svg { display: block; width: 9px; height: 9px; }

/* comparison area */
.compare {
  flex: 1;
  display: grid;
  grid-template-columns: 1fr 66px 1fr;
  grid-template-rows: 1fr auto;
  row-gap: 8px;
  padding: 0 10px 9px 10px;
  border: 1px solid #ababab;
  border-top: 0;
}
.side { display: flex; flex-direction: column; min-width: 0; }
.path { display: flex; align-items: center; gap: 6px; height: 58px; padding: 4px 7px 0 9px; }
.path label { font-size: 17px; font-weight: 700; }
.path small { font-size: 11px; font-weight: 400; }
.path input { flex: 1; min-width: 0; height: 24px; padding: 0 2px; border: 1px solid #b0b0b0; border-radius: 3px; background: #fff; }
.path button { width: 20px; height: 21px; border: 1px solid #bdbdbd; border-radius: 2px; background: #f8f8f8; }
.path button svg { display: block; width: 18px; height: 18px; }

.panes { flex: 1; display: grid; grid-template-columns: 256px 1fr; gap: 8px; padding-left: 2px; }
.tree { margin-top: 2px; padding: 1px 0; background: #fff; border: 1px solid #b4b4b4; }
.tree li { display: flex; align-items: center; height: 18px; padding-left: 7px; white-space: nowrap; }
.tree li.child { padding-left: 27px; }
.tree svg { width: 16px; height: 16px; margin-right: 6px; }
.tree svg.arw { width: 8px; height: 8px; margin-right: 8px; color: #555; }
.tree a { color: #00f; }

.workspace { display: flex; flex-direction: column; min-width: 0; }
.ws-tabs { display: flex; height: 23px; border-bottom: 3px solid #ffe9a0; box-shadow: inset 0 -1px #b4b4b4; }
.ws-tab { width: 71px; height: 20px; line-height: 21px; text-align: center; background: #ffe9a6; border: 1px solid #b4b4b4; border-bottom: 0; border-left-color: #e0cf90; }
.ws-frame {
  flex: 1;
  display: grid;
  grid-template-columns: 1fr 14px;
  grid-template-rows: 1fr 14px;
  padding: 0 1px 0 1px;
  border: 1px solid #b4b4b4;
  border-top: 0;
  background: #fff;
}
.canvas { width: 100%; height: 100%; border-left: 1px solid #b4b4b4; border-top: 1px solid #c8c8c8; background: #fff; }
.canvas.locked { background: #ccc; }
.vbar { display: flex; flex-direction: column; border-left: 1px solid #b4b4b4; border-right: 1px solid #b4b4b4; }
.hbar { display: flex; border-top: 1px solid #b4b4b4; border-left: 1px solid #b4b4b4; }
.corner { border: 1px solid #b4b4b4; border-bottom: 0; background: #eee; }
.sb { flex: 0 0 13px; display: grid; place-items: center; background: linear-gradient(#f2f2f2, #dfdfdf); color: #444; }
.sb svg { width: 8px; height: 8px; }
.vbar .thumb { flex: 1; background: linear-gradient(90deg, #b8b8b8, #a9a9a9); }
.hbar .thumb { flex: 606; background: linear-gradient(#b8b8b8, #a9a9a9); }
.hbar .track { flex: 151; background: #e4e4e4; border-left: 1px solid #c8c8c8; }
.hbar .thumb + .track { flex: 166; border-right: 1px solid #c8c8c8; }

/* diagram */
.wire path { fill: none; stroke: #4d4d4d; stroke-width: 1.500; }
.wire path.glow { stroke: #b0ffff; stroke-width: 13; stroke-linecap: round; }
.canvas text { font-family: "Liberation Sans", Arial, sans-serif; font-size: 19px; }
.canvas .ports text { font-size: 17px; }
.reader rect { fill: #ffd591; stroke: #17262e; stroke-width: 1.500; }
.insp rect { fill: #93bfea; stroke: #17262e; stroke-width: 1.500; }
.ports rect { fill: #b4d3f1; stroke: #17262e; stroke-width: 1.500; }
.chev { stroke: #4c5152; fill: #88a5bd; }
.reader .chev { fill: #c6a974; }
.picked { fill: #b0ffff; stroke: #0085b9; stroke-width: 7; }

/* centre column */
.middle { display: flex; flex-direction: column; align-items: center; padding-top: 15px; }
.mid { display: flex; flex-direction: column; align-items: center; gap: 4px; width: 40px; height: 55px; padding-top: 3px; border: 1px solid transparent; border-radius: 2px; font-size: 10px; line-height: 12px; }
.mid svg { width: 32px; height: 30px; }
.mid.on { background: #dcdcdc; border-color: #b0b0b0; margin-bottom: 20px; }
.mid.filter { margin-top: auto; }
.middle hr { width: 41px; height: 2px; margin: 12px 0 21px; border: 0; background: #fff; border-top: 1px solid #ddd; }
.middle p { margin: 18px 0 0; text-align: center; }
.middle hr.low { margin: 20px 0 2px; }
.dots { width: 17px; height: 1px; background: repeating-linear-gradient(90deg, #bbb 0 1px, transparent 1px 3px); }
.copy { display: grid; place-items: center; }
.copy .mid { color: #c0c0c0; height: auto; padding: 0; gap: 9px; }
.copy svg { height: 20px; }

/* change lists */
.diff { padding-bottom: 11px; border: 1px solid #b4b4b4; background: #fff; }
.diff li { display: flex; align-items: center; height: 36px; padding: 1px 15px 0 15px; background: #ebebeb; color: #999; font-weight: 700; }
.diff svg { width: 8px; height: 8px; margin-right: 12px; }
.diff li.has { color: #000; }
.diff li.has svg { color: #1b303b; }
.diff li.item { padding-left: 10px; background: #b0ffff; border-top: 2px solid #0085b9; color: #000; font-weight: 400; }
.diff li.item svg { width: 16px; height: 16px; margin-right: 9px; }
.diff li.item a { margin-left: auto; color: #000; text-decoration: none; }
.diff li.none { padding-left: 35px; background: #fff; border-top: 2px solid #ccc; font-weight: 400; }

.status { height: 29px; border-top: 1px solid #808080; margin-top: 1px; }

.pointer { position: absolute; left: 2259px; top: 81px; width: 10px; height: 15px; }
```
